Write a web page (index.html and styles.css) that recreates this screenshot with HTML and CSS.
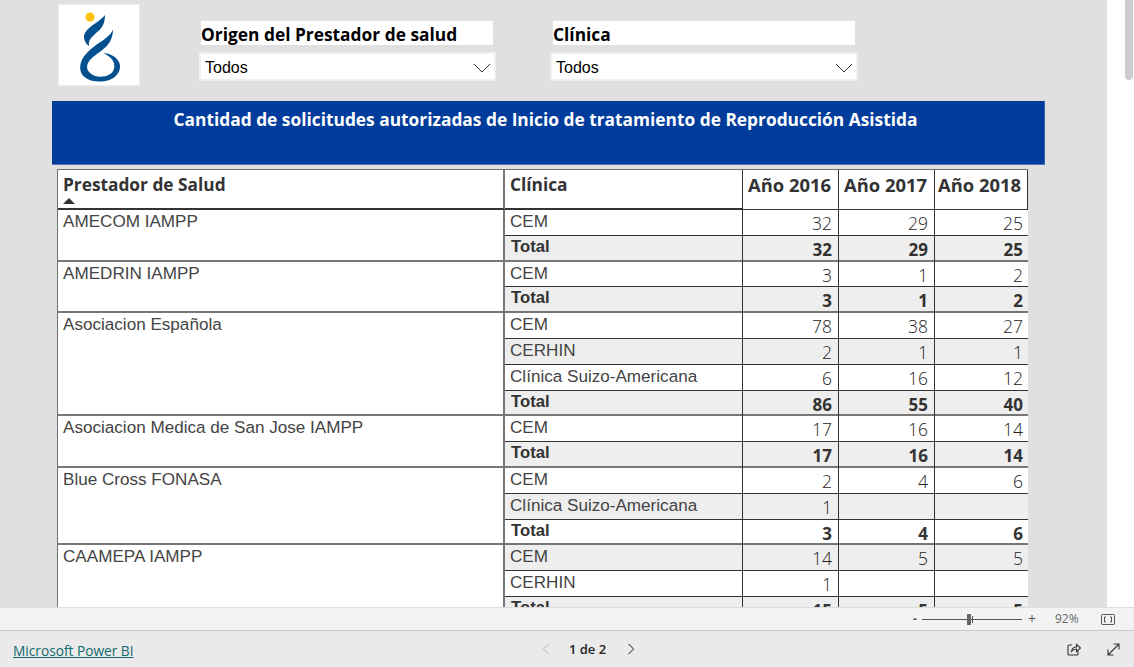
FILE: index.html
```html
<!DOCTYPE html>
<html lang="es">
<head>
<meta charset="utf-8">
<title>Microsoft Power BI</title>
<link rel="stylesheet" href="styles.css">
</head>
<body>
<div class="viewer">
  <div class="content">
    <main class="canvas">
      <header class="top">
        <div class="logo">
          <svg viewBox="0 0 82 82" width="82" height="82" aria-hidden="true">
            <circle cx="32" cy="13" r="4.5" fill="#ffc20e"/>
            <path d="M47 11 C42 18 26 24 26 33 C26 37 29 41 31 42 C30 36 34 33 38 29 C43 25 47 21 47 11Z" fill="#04508f"/>
            <path d="M55 25 C53 34 36 40 28 50 C18 61 20 77 41 77.500 C57 78 65 67 61 58 C58 52 50 49 45 49 C52 52 58 57 56 65 C54 72 44 74 37 72 C27 68 27 60 34 54 C43 46 55 42 55 25Z" fill="#04508f"/>
          </svg>
        </div>
        <div class="slicers">
          <section class="slicer">
            <div class="slicer-title">Origen del Prestador de salud</div>
            <div class="slicer-drop"><span>Todos</span>
              <svg class="chev" viewBox="0 0 18 10" width="18" height="10"><path d="M1 1 L9 9 L17 1" fill="none" stroke="#333" stroke-width="1"/></svg>
            </div>
          </section>
          <section class="slicer slicer-b">
            <div class="slicer-title">Clínica</div>
            <div class="slicer-drop"><span>Todos</span>
              <svg class="chev" viewBox="0 0 18 10" width="18" height="10"><path d="M1 1 L9 9 L17 1" fill="none" stroke="#333" stroke-width="1"/></svg>
            </div>
          </section>
        </div>
      </header>

      <h1 class="banner">Cantidad de solicitudes autorizadas de Inicio de tratamiento de Reproducción Asistida</h1>

      <div class="matrix">
        <div class="head">
          <div class="h-prov">Prestador de Salud<span class="sort"></span></div>
          <div class="h-cli">Clínica</div>
          <div class="h-num">Año 2016</div>
          <div class="h-num">Año 2017</div>
          <div class="h-num h-last">Año 2018</div>
        </div>

        <div class="group">
          <div class="prov">AMECOM IAMPP</div>
          <div class="rows">
            <div class="row"><div class="cli">CEM</div><div class="n">32</div><div class="n">29</div><div class="n">25</div></div>
            <div class="row total alt"><div class="cli">Total</div><div class="n">32</div><div class="n">29</div><div class="n">25</div></div>
          </div>
        </div>
        <div class="group">
          <div class="prov">AMEDRIN IAMPP</div>
          <div class="rows">
            <div class="row"><div class="cli">CEM</div><div class="n">3</div><div class="n">1</div><div class="n">2</div></div>
            <div class="row total alt"><div class="cli">Total</div><div class="n">3</div><div class="n">1</div><div class="n">2</div></div>
          </div>
        </div>
        <div class="group">
          <div class="prov">Asociacion Española</div>
          <div class="rows">
            <div class="row"><div class="cli">CEM</div><div class="n">78</div><div class="n">38</div><div class="n">27</div></div>
            <div class="row alt"><div class="cli">CERHIN</div><div class="n">2</div><div class="n">1</div><div class="n">1</div></div>
            <div class="row"><div class="cli">Clínica Suizo-Americana</div><div class="n">6</div><div class="n">16</div><div class="n">12</div></div>
            <div class="row total alt"><div class="cli">Total</div><div class="n">86</div><div class="n">55</div><div class="n">40</div></div>
          </div>
        </div>
        <div class="group">
          <div class="prov">Asociacion Medica de San Jose IAMPP</div>
          <div class="rows">
            <div class="row"><div class="cli">CEM</div><div class="n">17</div><div class="n">16</div><div class="n">14</div></div>
            <div class="row total alt"><div class="cli">Total</div><div class="n">17</div><div class="n">16</div><div class="n">14</div></div>
          </div>
        </div>
        <div class="group">
          <div class="prov">Blue Cross FONASA</div>
          <div class="rows">
            <div class="row"><div class="cli">CEM</div><div class="n">2</div><div class="n">4</div><div class="n">6</div></div>
            <div class="row alt"><div class="cli">Clínica Suizo-Americana</div><div class="n">1</div><div class="n"></div><div class="n"></div></div>
            <div class="row total"><div class="cli">Total</div><div class="n">3</div><div class="n">4</div><div class="n">6</div></div>
          </div>
        </div>
        <div class="group">
          <div class="prov">CAAMEPA IAMPP</div>
          <div class="rows">
            <div class="row alt"><div class="cli">CEM</div><div class="n">14</div><div class="n">5</div><div class="n">5</div></div>
            <div class="row"><div class="cli">CERHIN</div><div class="n">1</div><div class="n"></div><div class="n"></div></div>
            <div class="row total alt"><div class="cli">Total</div><div class="n">15</div><div class="n">5</div><div class="n">5</div></div>
          </div>
        </div>
      </div>
    </main>
    <aside class="scroll"><div class="thumb"></div></aside>
  </div>

  <div class="zoombar">
    <span class="z-minus">-</span>
    <div class="z-track"><span class="z-thumb"></span><span class="z-tick"></span></div>
    <span class="z-plus">+</span>
    <span class="z-val">92%</span>
    <svg class="z-fit" viewBox="0 0 14 11" width="14" height="11"><rect x=".5" y=".5" width="13" height="10" rx="1" fill="none" stroke="#555"/><path d="M5 3H3.500V8H5M9 3H10.500V8H9" fill="none" stroke="#555"/></svg>
  </div>

  <footer class="bottom">
    <a class="brand" href="#">Microsoft Power BI</a>
    <nav class="pager">
      <svg viewBox="0 0 8 14" width="8" height="12"><path d="M7 1 L1 7 L7 13" fill="none" stroke="#c4c4c4" stroke-width="1.200"/></svg>
      <span class="page">1 de 2</span>
      <svg viewBox="0 0 8 14" width="8" height="12"><path d="M1 1 L7 7 L1 13" fill="none" stroke="#555" stroke-width="1.200"/></svg>
    </nav>
    <div class="actions">
      <svg viewBox="0 0 14 14" width="14" height="14"><path d="M5 3H2a1 1 0 0 0-1 1v8a1 1 0 0 0 1 1h8a1 1 0 0 0 1-1V9" fill="none" stroke="#333" stroke-width="1.100"/><path d="M4.500 9.500C5 6.500 7 5 9.500 5V2.500L13.500 6 9.500 9.500V7C7.500 7 6 7.800 4.500 9.500Z" fill="none" stroke="#333" stroke-width="1.100"/></svg>
      <svg viewBox="0 0 13 13" width="13" height="13"><path d="M1 12L12 1M6.500 1H12V6.500M1 6.500V12H6.500" fill="none" stroke="#333" stroke-width="1.100"/></svg>
    </div>
  </footer>
</div>
</body>
</html>
```
FILE: styles.css
```css
* { box-sizing: border-box; }
html, body { margin: 0; height: 100%; }
body { overflow: hidden; font-family: "Liberation Sans", Arial, sans-serif; color: #333; }

.viewer { display: flex; flex-direction: column; width: 1134px; height: 667px; }
.content { display: flex; height: 607px; flex: none; }

.canvas { flex: 1; min-width: 0; background: #e0e0e0; overflow: hidden; padding-left: 52px; }
.scroll { width: 27px; background: #fff; position: relative; flex: none; }
.thumb { position: absolute; right: 1px; top: 0; width: 8px; height: 80px; background: #ccc; border-radius: 0 0 4px 4px; }

.top { display: flex; height: 101px; align-items: flex-start; }
.logo { width: 82px; height: 82px; margin: 4px 0 0 6px; background: #fff; border: 1px solid #eee; flex: none; }
.logo svg { display: block; margin: -1px; }

.slicers { display: flex; margin: 21px 0 0 59px; gap: 55px; }
.slicer { width: 297px; }
.slicer-b { width: 307px; }
.slicer-title { height: 24px; margin: 0 3px 0 2px; background: #fff; color: #000; font: 700 17.350px/26px "Open Sans", sans-serif; white-space: nowrap; }
.slicer-drop { height: 29px; margin-top: 7px; background: #fff; border: 2px solid #f0f0f0; color: #000; font-size: 16px; line-height: 25px; padding: 2px 3px 0 4px; display: flex; justify-content: space-between; align-items: center; }
.slicer-b .slicer-drop { margin-left: -1px; }
.chev { flex: none; }

.banner { margin: 0; width: 993px; height: 64px; background: #003c9b; border-bottom: 1px solid #5577b5; border-right: 1px solid #2f5fb0; color: #fff; font: 700 17.330px/37px "Open Sans", sans-serif; text-align: center; padding-right: 5px; }

.matrix { width: 971px; margin: 4px 0 0 5px; }
.head { display: flex; height: 41px; background: #fff; border: solid #707070; border-width: 1px 0 0 1px; color: #333; font: 700 17.300px/30px "Open Sans", sans-serif; }
.h-prov { width: 447px; flex: none; border-right: 2px solid #777; border-bottom: 2px solid #333; padding-left: 5px; position: relative; white-space: nowrap; }
.sort { position: absolute; left: 5px; top: 28px; width: 0; height: 0; border: 6px solid transparent; border-top: 0; border-bottom: 6px solid #333; }
.h-cli { width: 238px; flex: none; border-right: 1px solid #333; border-bottom: 2px solid #333; padding-left: 5px; }
.h-num { width: 96px; flex: none; border-right: 1px solid #333; border-bottom: 1px solid #333; text-align: right; padding-right: 7px; white-space: nowrap; font-size: 18.400px; }
.h-last { width: 93px; padding-right: 6px; }

.group { display: flex; background: #fff; border-left: 1px solid #707070; }
.prov { width: 447px; flex: none; border-right: 2px solid #777; box-shadow: inset 0 -2px 0 #777; padding-left: 5px; font-size: 17.100px; line-height: 24px; color: #444; white-space: nowrap; }
.rows { flex: 1; min-width: 0; }
.row { display: grid; grid-template-columns: 238px 96px 96px 93px; height: 25.800px; border-bottom: 1px solid #333; }
.alt { background: #eee; }
.cli { border-right: 1px solid #333; padding-left: 5px; font-size: 17.100px; line-height: 24px; color: #444; white-space: nowrap; }
.n { border-right: 1px solid #333; text-align: right; padding-right: 6px; font: 300 17.500px/27px "Open Sans", sans-serif; color: #222; }
.n:last-child { border-right: 0; padding-right: 5px; }
.total .cli { font-size: 16.700px; line-height: 22px; font-weight: 700; color: #333; padding-left: 6px; }
.total .n { font-weight: 700; font-size: 17px; color: #333; }
.group .row:last-child { border-bottom: 2px solid #777; }

.zoombar { height: 24px; flex: none; background: #f3f3f3; border-top: 1px solid #ddd; border-bottom: 1px solid #c8c8c8; display: flex; align-items: center; color: #555; font: 400 12px/1 "Open Sans", sans-serif; padding-left: 913px; }
.z-minus { width: 9px; font-weight: 700; }
.z-track { width: 100px; height: 1px; background: #555; position: relative; }
.z-thumb { position: absolute; left: 45px; top: -5px; width: 4px; height: 11px; background: #666; }
.z-tick { position: absolute; left: 50px; top: -3px; width: 1px; height: 7px; background: #555; }
.z-plus { margin-left: 6px; font-size: 14px; width: 10px; }
.z-val { margin-left: 17px; width: 46px; color: #666; }
.z-fit { flex: none; }

.bottom { flex: 1; background: #eaeaea; display: flex; align-items: center; padding-left: 13px; font: 400 13px/1 "Open Sans", sans-serif; }
.brand { color: #11696b; text-decoration: underline; font-size: 13.700px; width: 529px; white-space: nowrap; flex: none; padding-top: 3px; }
.pager { display: flex; align-items: center; width: 93px; justify-content: space-between; flex: none; color: #252423; }
.page { font-size: 13px; font-weight: 600; padding: 1px 2px 0 0; }
.actions { margin-left: auto; display: flex; gap: 26px; margin-right: 14px; align-items: center; }
```
